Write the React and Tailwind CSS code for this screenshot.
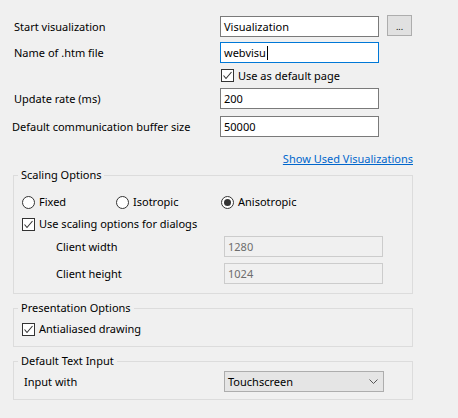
import React from "react";

function CheckBox({ checked = true }) {
  return (
    <span className="w-[13px] h-[13px] shrink-0 border border-[#333333] bg-white grid place-items-center">
      {checked ? (
        <svg width="11" height="11" viewBox="0 0 11 11">
          <path d="M1.5 5.5 L4 8.5 L9.5 2" fill="none" stroke="#333333" strokeWidth="1.1" />
        </svg>
      ) : null}
    </span>
  );
}

function Radio({ checked = false }) {
  return (
    <span className="w-[13px] h-[13px] shrink-0 rounded-full border border-[#333333] bg-white grid place-items-center">
      {checked ? <span className="w-[7px] h-[7px] rounded-full bg-[#333333]" /> : null}
    </span>
  );
}

function TextBox({ value, focused = false, disabled = false }) {
  return (
    <div
      className={`w-[159px] h-[21px] border flex items-center pl-[3px] ${
        disabled
          ? "border-[#cccccc] bg-[#f0f0f0] text-[#6d6d6d]"
          : focused
          ? "border-[#0078d7] bg-white"
          : "border-[#7a7a7a] bg-white"
      }`}
    >
      <span>{value}</span>
      {focused ? <span className="w-px h-[14px] bg-black ml-px" /> : null}
    </div>
  );
}

function Group({ title, className = "", children }) {
  return (
    <fieldset className={`mx-[13px] w-[400px] border border-[#dcdcdc] ${className}`}>
      <legend className="ml-[4px] px-[3px] h-[16px] leading-[16px]">{title}</legend>
      {children}
    </fieldset>
  );
}

export default function App() {
  return (
    <div
      className="w-[458px] h-[418px] bg-[#f0f0f0] text-black text-[11px] leading-[16px] overflow-hidden"
      style={{ fontFamily: '"Noto Sans", "Liberation Sans", sans-serif' }}
    >
      <div className="pt-[16px]">
        <div className="flex items-center h-[21px]">
          <span className="pl-[14px] w-[220px]">Start visualization</span>
          <TextBox value="Visualization" />
          <button
            type="button"
            className="ml-[8px] -mt-[2px] w-[25px] h-[21px] border border-[#adadad] bg-[#e1e1e1] text-[9px] leading-none pt-[2px]"
          >
            ...
          </button>
        </div>

        <div className="flex items-center h-[21px] mt-[5px]">
          <span className="pl-[14px] w-[220px]">Name of .htm file</span>
          <TextBox value="webvisu" focused />
        </div>

        <div className="flex items-center h-[25px]">
          <span className="w-[221px]" />
          <CheckBox />
          <span className="ml-[4px]">Use as default page</span>
        </div>

        <div className="flex items-center h-[21px]">
          <span className="pl-[14px] w-[220px]">Update rate (ms)</span>
          <TextBox value="200" />
        </div>

        <div className="flex items-center h-[21px] mt-[7px]">
          <span className="pl-[12px] w-[220px]">Default communication buffer size</span>
          <TextBox value="50000" />
        </div>

        <div className="flex justify-end w-[413px] mt-[14px] h-[16px]">
          <a href="#" className="text-[#0066cc] underline">
            Show Used Visualizations
          </a>
        </div>

        <Group title="Scaling Options" className="pb-[9px]">
          <div className="flex items-center h-[22px] mt-[8px] pl-[8px]">
            <div className="flex items-center gap-[4px] w-[94px]">
              <Radio />
              <span>Fixed</span>
            </div>
            <div className="flex items-center gap-[4px] w-[105px]">
              <Radio />
              <span>Isotropic</span>
            </div>
            <div className="flex items-center gap-[4px]">
              <Radio checked />
              <span>Anisotropic</span>
            </div>
          </div>
          <div className="flex items-center gap-[4px] h-[22px] pl-[8px]">
            <CheckBox />
            <span>Use scaling options for dialogs</span>
          </div>
          <div className="flex items-center h-[21px] mt-px">
            <span className="pl-[42px] w-[210px]">Client width</span>
            <TextBox value="1280" disabled />
          </div>
          <div className="flex items-center h-[21px] mt-[6px]">
            <span className="pl-[42px] w-[210px]">Client height</span>
            <TextBox value="1024" disabled />
          </div>
        </Group>

        <Group title="Presentation Options" className="mt-[6px] pb-[6px]">
          <div className="flex items-center gap-[4px] h-[22px] mt-[2px] pl-[8px]">
            <CheckBox />
            <span>Antialiased drawing</span>
          </div>
        </Group>

        <Group title="Default Text Input" className="mt-[6px] pb-[7px]">
          <div className="flex items-center h-[21px] mt-[2px]">
            <span className="pl-[10px] w-[210px]">Input with</span>
            <div className="w-[160px] h-[21px] border border-[#adadad] bg-[#e5e5e5] flex items-center justify-between pl-[3px] pr-[5px]">
              <span>Touchscreen</span>
              <svg width="9" height="6" viewBox="0 0 9 6">
                <path d="M0.5 0.5 L4.5 4.5 L8.5 0.5" fill="none" stroke="#555555" strokeWidth="1" />
              </svg>
            </div>
          </div>
        </Group>
      </div>
    </div>
  );
}
